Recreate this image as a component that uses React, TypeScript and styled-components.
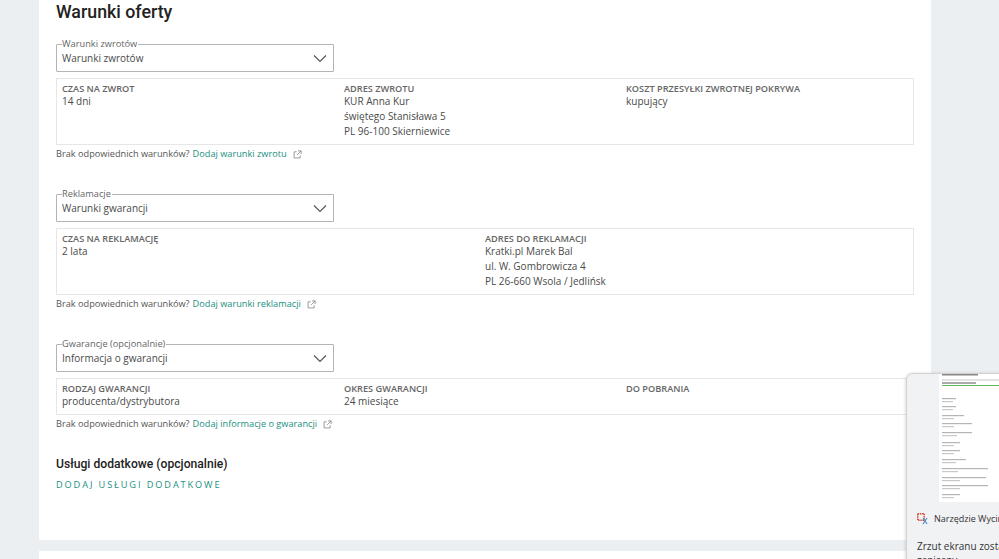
import React from "react";
import styled, { createGlobalStyle } from "styled-components";

const Global = createGlobalStyle`
  html, body { margin: 0; padding: 0; background: #eceff1; }
  body { width: 999px; height: 559px; overflow: hidden; font-family: "Open Sans", sans-serif; position: relative; }
`;

const Page = styled.div`
  width: 999px;
  height: 559px;
  padding-left: 39px;
  box-sizing: border-box;
  display: flex;
  flex-direction: column;
  gap: 11px;
  overflow: hidden;
`;

const Card = styled.main`
  width: 892px;
  height: 540px;
  flex: none;
  background: #fff;
  box-sizing: border-box;
  padding: 0 17px;
`;

const NextCard = styled.div`
  width: 892px;
  height: 40px;
  flex: none;
  background: #fff;
`;

const Title = styled.h2`
  margin: 0;
  font: 500 17.8px/23px Roboto, sans-serif;
  color: #222;
  height: 44px;
`;

const Section = styled.section`
  height: 150px;
`;

const SelectBox = styled.div`
  position: relative;
  width: 278px;
  height: 28px;
  box-sizing: border-box;
  border: 1px solid #b4b4b4;
  border-radius: 1px;
  padding: 0 5px;
  display: flex;
  align-items: center;
  justify-content: space-between;
  font-size: 10px;
  color: #4a4a4a;
`;

const SelectLabel = styled.span`
  position: absolute;
  left: 5px;
  top: -7px;
  padding: 0 1px 0 0;
  background: #fff;
  font-size: 9.25px;
  line-height: 12px;
  color: #666;
`;

const Chevron = styled.svg`
  width: 14px;
  height: 9px;
  margin-right: 1px;
  flex: none;
`;

const InfoBox = styled.div<{ $cols: number }>`
  margin-top: 6px;
  width: 858px;
  box-sizing: border-box;
  border: 1px solid #e6e6e6;
  padding: 4px 5px 0;
  display: grid;
  grid-template-columns: repeat(${(p) => p.$cols}, 1fr);
  min-height: 37px;
`;

const Tall = styled(InfoBox)`
  height: 67px;
`;

const Column = styled.div`
  display: flex;
  flex-direction: column;
`;

const Head = styled.div`
  font-size: 9.2px;
  line-height: 11px;
  font-weight: 600;
  color: #666;
  text-transform: uppercase;
`;

const Value = styled.div`
  font-size: 10px;
  line-height: 15px;
  color: #4a4a4a;
`;

const Helper = styled.p`
  margin: 2px 0 0;
  font-size: 9.2px;
  line-height: 14px;
  color: #555;
  display: flex;
  align-items: center;
  gap: 3px;
`;

const Link = styled.a`
  color: #1a8f80;
  text-decoration: none;
`;

const ExtIcon = styled.svg`
  width: 9px;
  height: 9px;
  margin-left: 3px;
  flex: none;
`;

const SubTitle = styled.h3`
  margin: 0;
  padding-top: 25px;
  font: 500 12.15px/16px Roboto, sans-serif;
  color: #222;
`;

const AddLink = styled.a`
  display: block;
  margin-top: 6px;
  font-size: 9.2px;
  line-height: 14px;
  font-weight: 400;
  letter-spacing: 1.9px;
  color: #1a8f80;
  text-transform: uppercase;
`;

const Toast = styled.aside`
  position: absolute;
  left: 906px;
  top: 373px;
  width: 140px;
  height: 220px;
  box-sizing: border-box;
  background: #f0f2f4;
  border: 1px solid #d2d2d2;
  border-radius: 7px 0 0 0;
  box-shadow: -1px 0 3px rgba(0, 0, 0, 0.12);
  overflow: hidden;
`;

const Thumb = styled.svg`
  position: absolute;
  left: 32px;
  top: -1px;
  width: 70px;
  height: 129px;
`;

const ToastApp = styled.div`
  position: absolute;
  left: 10px;
  top: 138px;
  display: flex;
  align-items: center;
  gap: 5px;
  font: 9px/14px "Open Sans", sans-serif;
  color: #333;
  white-space: nowrap;
`;

const ToastText = styled.div`
  position: absolute;
  left: 10px;
  top: 165px;
  width: 100px;
  font: 10px/14px "Open Sans", sans-serif;
  color: #333;
`;

const ChevronDown = () => (
  <Chevron viewBox="0 0 14 9">
    <path d="M1 1.5 L7 7.5 L13 1.5" fill="none" stroke="#555" strokeWidth="1.2" />
  </Chevron>
);

const External = () => (
  <ExtIcon viewBox="0 0 10 10">
    <path d="M4 2H1.2v6.8H8V6M5.5 1H9v3.5M9 1L4.5 5.5" fill="none" stroke="#777" strokeWidth="0.8" />
  </ExtIcon>
);

const Select = ({ label, value }: { label: string; value: string }) => (
  <SelectBox>
    <SelectLabel>{label}</SelectLabel>
    <span>{value}</span>
    <ChevronDown />
  </SelectBox>
);

const Help = ({ link }: { link: string }) => (
  <Helper>
    Brak odpowiednich warunków?
    <Link>{link}</Link>
    <External />
  </Helper>
);

const thumbRows: [number, number, number][] = [
  [25, 14, 11],
  [33, 14, 11],
  [42, 22, 12],
  [50, 30, 12],
  [59, 30, 15],
  [69, 18, 12],
  [77, 18, 12],
  [86, 24, 14],
  [95, 46, 16],
  [104, 44, 18],
  [112, 46, 18],
  [121, 18, 12],
];

const SnipIcon = () => (
  <svg width="12" height="12" viewBox="0 0 12 12">
    <rect x="0.7" y="0.7" width="6.5" height="6.5" fill="none" stroke="#d8402f" strokeWidth="1.4" strokeDasharray="1.4 0.8" />
    <path d="M6 5 L10 11 M10 5 L6 11" stroke="#4a8fc4" strokeWidth="1.2" />
  </svg>
);

export default function App() {
  return (
    <>
      <Global />
      <Page>
        <Card>
          <Title>Warunki oferty</Title>
          <Section>
            <Select label="Warunki zwrotów" value="Warunki zwrotów" />
            <Tall $cols={3}>
              <Column>
                <Head>Czas na zwrot</Head>
                <Value>14 dni</Value>
              </Column>
              <Column>
                <Head>Adres zwrotu</Head>
                <Value>KUR Anna Kur</Value>
                <Value>świętego Stanisława 5</Value>
                <Value>PL 96-100 Skierniewice</Value>
              </Column>
              <Column>
                <Head>Koszt przesyłki zwrotnej pokrywa</Head>
                <Value>kupujący</Value>
              </Column>
            </Tall>
            <Help link="Dodaj warunki zwrotu" />
          </Section>
          <Section>
            <Select label="Reklamacje" value="Warunki gwarancji" />
            <Tall $cols={2}>
              <Column>
                <Head>Czas na reklamację</Head>
                <Value>2 lata</Value>
              </Column>
              <Column>
                <Head>Adres do reklamacji</Head>
                <Value>Kratki.pl Marek Bal</Value>
                <Value>ul. W. Gombrowicza 4</Value>
                <Value>PL 26-660 Wsola / Jedlińsk</Value>
              </Column>
            </Tall>
            <Help link="Dodaj warunki reklamacji" />
          </Section>
          <div>
            <Select label="Gwarancje (opcjonalnie)" value="Informacja o gwarancji" />
            <InfoBox $cols={3}>
              <Column>
                <Head>Rodzaj gwarancji</Head>
                <Value>producenta/dystrybutora</Value>
              </Column>
              <Column>
                <Head>Okres gwarancji</Head>
                <Value>24 miesiące</Value>
              </Column>
              <Column>
                <Head>Do pobrania</Head>
              </Column>
            </InfoBox>
            <Help link="Dodaj informacje o gwarancji" />
          </div>
          <SubTitle>Usługi dodatkowe (opcjonalnie)</SubTitle>
          <AddLink>Dodaj usługi dodatkowe</AddLink>
        </Card>
        <NextCard />
      </Page>
      <Toast>
        <Thumb viewBox="0 0 70 129">
          <rect width="70" height="129" fill="#fff" />
          <rect x="3" y="1" width="36" height="1.5" fill="#888" />
          <rect x="3" y="6" width="66" height="2" fill="#e2e2e2" />
          <rect x="3" y="9" width="34" height="2" fill="#aaa" />
          <rect x="3" y="12" width="66" height="1" fill="#5cb85c" />
          {thumbRows.map(([y, a, b]) => (
            <g key={y}>
              <rect x="3" y={y} width={a} height="1.2" fill="#b5b5b5" />
              <rect x="3" y={y + 3} width={b} height="1.2" fill="#c8c8c8" />
            </g>
          ))}
        </Thumb>
        <ToastApp>
          <SnipIcon />
          Narzędzie Wycinanie
        </ToastApp>
        <ToastText>Zrzut ekranu został zapisany</ToastText>
      </Toast>
    </>
  );
}
